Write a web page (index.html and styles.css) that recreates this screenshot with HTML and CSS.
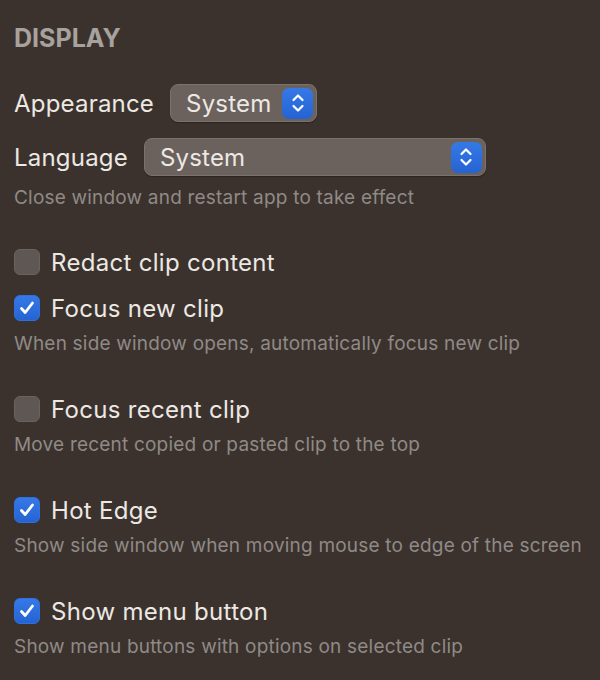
FILE: index.html
```html
<!DOCTYPE html>
<html>
<head>
    <title>Display Settings</title>
    <link rel="stylesheet" href="styles.css">
</head>
<body>

    <div class="panel">
        <h2 class="heading">DISPLAY</h2>

        <div class="field">
            <span class="field-label">Appearance</span>
            <div class="popup popup-short">
                <span class="popup-value">System</span>
                <span class="stepper">
                    <svg width="16" height="22" viewBox="0 0 16 22"><path d="M3.5 8 L8 3.5 L12.5 8 M3.5 14 L8 18.5 L12.5 14" fill="none" stroke="#fff" stroke-width="2.2" stroke-linecap="round" stroke-linejoin="round"/></svg>
                </span>
            </div>
        </div>

        <div class="field field-second">
            <span class="field-label">Language</span>
            <div class="popup popup-wide">
                <span class="popup-value">System</span>
                <span class="stepper">
                    <svg width="16" height="22" viewBox="0 0 16 22"><path d="M3.5 8 L8 3.5 L12.5 8 M3.5 14 L8 18.5 L12.5 14" fill="none" stroke="#fff" stroke-width="2.2" stroke-linecap="round" stroke-linejoin="round"/></svg>
                </span>
            </div>
        </div>
        <p class="note note-lang">Close window and restart app to take effect</p>

        <label class="option option-first">
            <span class="box"></span>
            <span class="option-label">Redact clip content</span>
        </label>

        <label class="option option-close">
            <span class="box checked">
                <svg width="18" height="18" viewBox="0 0 18 18"><path d="M3.5 9.5 L7.2 13.5 L14.5 4" fill="none" stroke="#fff" stroke-width="2.8" stroke-linecap="round" stroke-linejoin="round"/></svg>
            </span>
            <span class="option-label">Focus new clip</span>
        </label>
        <p class="note">When side window opens, automatically focus new clip</p>

        <label class="option">
            <span class="box"></span>
            <span class="option-label">Focus recent clip</span>
        </label>
        <p class="note">Move recent copied or pasted clip to the top</p>

        <label class="option">
            <span class="box checked">
                <svg width="18" height="18" viewBox="0 0 18 18"><path d="M3.5 9.5 L7.2 13.5 L14.5 4" fill="none" stroke="#fff" stroke-width="2.8" stroke-linecap="round" stroke-linejoin="round"/></svg>
            </span>
            <span class="option-label">Hot Edge</span>
        </label>
        <p class="note">Show side window when moving mouse to edge of the screen</p>

        <label class="option">
            <span class="box checked">
                <svg width="18" height="18" viewBox="0 0 18 18"><path d="M3.5 9.5 L7.2 13.5 L14.5 4" fill="none" stroke="#fff" stroke-width="2.8" stroke-linecap="round" stroke-linejoin="round"/></svg>
            </span>
            <span class="option-label">Show menu button</span>
        </label>
        <p class="note">Show menu buttons with options on selected clip</p>
    </div>

</body>
</html>
```

FILE: styles.css
```css
body, html {
    margin: 0;
    height: 100%;
    background-color: #3b322d;
    font-family: Inter, "Noto Sans", sans-serif;
    color: #ece8e4;
}

.panel {
    display: flex;
    flex-direction: column;
    align-items: flex-start;
    padding: 23px 14px 0 14px;
}

.heading {
    margin: 0;
    height: 30px;
    line-height: 30px;
    font-size: 25px;
    font-weight: 700;
    color: #a7a29e;
}

.field {
    display: flex;
    align-items: center;
    gap: 16px;
    margin-top: 31px;
}

.field-second {
    margin-top: 16px;
}

.field-label {
    font-size: 24px;
    letter-spacing: 0.2px;
}

.popup {
    display: flex;
    align-items: center;
    justify-content: space-between;
    box-sizing: border-box;
    height: 38px;
    padding: 0 3px 0 15px;
    background-color: #6b625e;
    border: 1px solid #7a726e;
    border-radius: 8px;
    box-shadow: 0 1px 1px rgba(0, 0, 0, 0.3);
}

.popup-short {
    width: 147px;
}

.popup-wide {
    width: 342px;
}

.popup-value {
    font-size: 24px;
    letter-spacing: 0.2px;
}

.stepper {
    display: flex;
    align-items: center;
    justify-content: center;
    width: 31px;
    height: 31px;
    border-radius: 7px;
    background: linear-gradient(#3579e6, #2563d3);
}

.note {
    margin: 9px 0 0 0;
    height: 24px;
    line-height: 24px;
    font-size: 19px;
    letter-spacing: 0.2px;
    color: #8f8a87;
}

.note-lang {
    margin-top: 10px;
}

.option {
    display: flex;
    align-items: center;
    gap: 11px;
    height: 30px;
    margin-top: 38px;
}

.option-first {
    margin-top: 37px;
}

.option-close {
    margin-top: 16px;
}

.box {
    display: flex;
    align-items: center;
    justify-content: center;
    box-sizing: border-box;
    width: 26px;
    height: 26px;
    border-radius: 6px;
    background-color: #5f5753;
    border: 1px solid #6a625e;
}

.box.checked {
    background: linear-gradient(#3579e6, #2563d3);
    border-color: #2f6fe0;
}

.option-label {
    font-size: 24px;
    letter-spacing: 0.3px;
}
```
